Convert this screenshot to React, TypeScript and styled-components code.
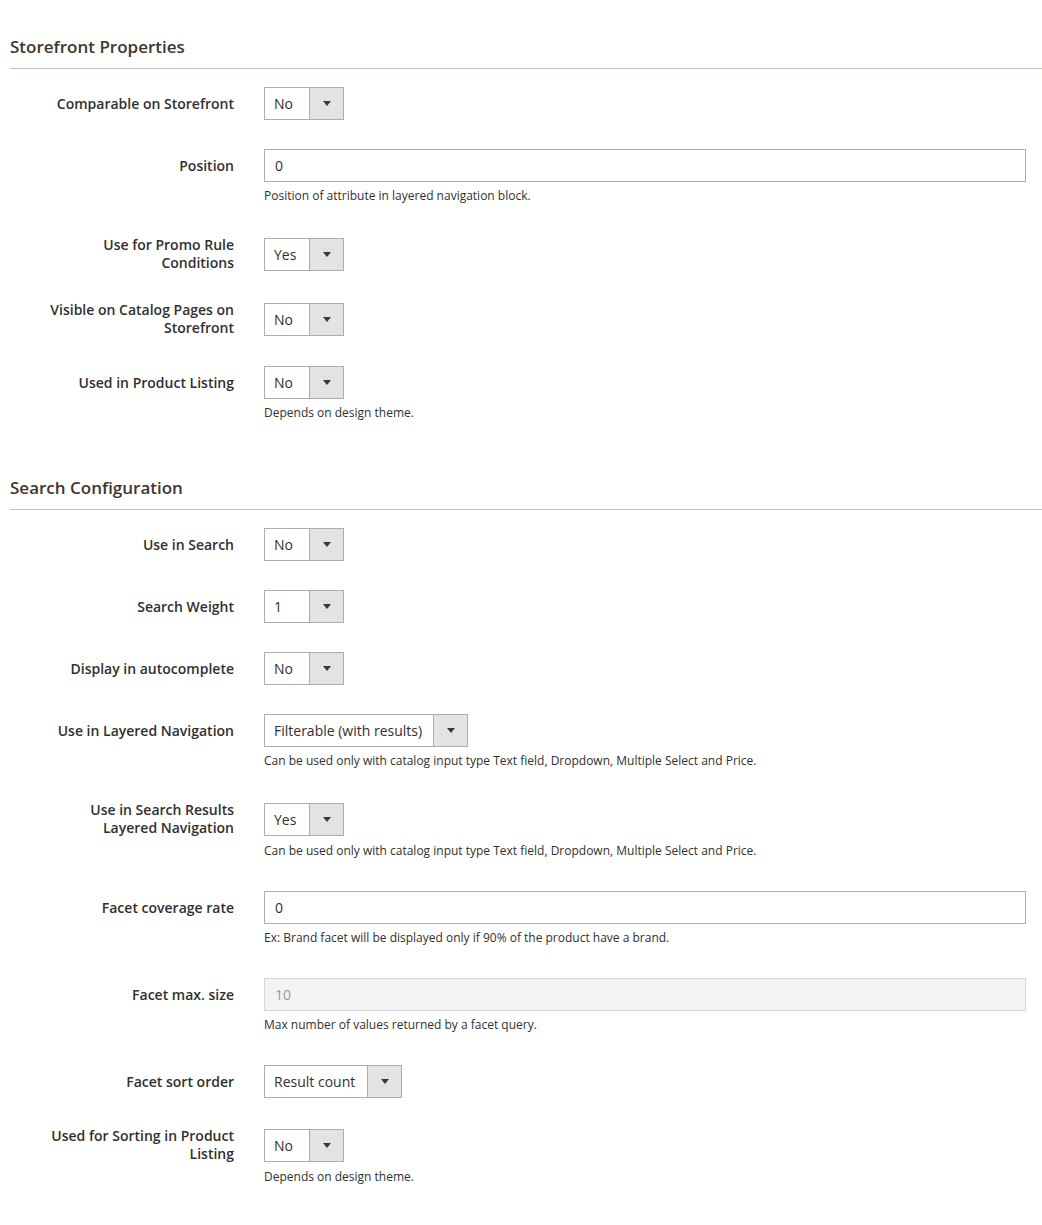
import React from 'react';
import styled, { createGlobalStyle } from 'styled-components';

const GlobalStyle = createGlobalStyle`
  body {
    margin: 0;
    background: #ffffff;
    font-family: 'Open Sans', 'Liberation Sans', sans-serif;
    color: #303030;
  }
`;

const Page = styled.div`
  padding: 36px 0 40px 10px;
`;

const Fieldset = styled.section`
  & + & {
    padding-top: 24px;
  }
`;

const Legend = styled.h2`
  margin: 0 0 18px;
  padding-bottom: 10px;
  border-bottom: 1px solid #cac3b4;
  font-size: 17px;
  font-weight: 600;
  line-height: 22px;
  color: #41362f;
`;

const Field = styled.div`
  display: grid;
  grid-template-columns: 224px 762px;
  column-gap: 30px;
  margin-bottom: 29px;
`;

const Label = styled.label`
  grid-row: 1;
  grid-column: 1;
  align-self: center;
  padding-left: 34px;
  text-align: right;
  font-size: 14px;
  font-weight: 600;
  line-height: 18px;
  color: #303030;
`;

const Control = styled.div`
  grid-row: 1;
  grid-column: 2;
  align-self: center;
  display: flex;
`;

const Note = styled.div`
  grid-row: 2;
  grid-column: 2;
  margin: 4px 0 1px;
  font-size: 12px;
  line-height: 20px;
  color: #303030;
`;

const TextInput = styled.input`
  box-sizing: border-box;
  width: 100%;
  height: 33px;
  padding: 0 10px;
  border: 1px solid #adadad;
  border-radius: 0;
  background: #ffffff;
  font-family: inherit;
  font-size: 14px;
  color: #303030;
  outline: none;

  &:disabled {
    background: #e9e9e9;
    opacity: 0.5;
  }
`;

const SelectBox = styled.div<{ $width: number }>`
  box-sizing: border-box;
  display: flex;
  width: ${(p) => p.$width}px;
  height: 33px;
  border: 1px solid #adadad;
  background: #ffffff;
`;

const SelectValue = styled.span`
  flex: 1;
  padding-left: 9px;
  font-size: 14px;
  line-height: 31px;
  color: #303030;
  white-space: nowrap;
`;

const SelectButton = styled.span`
  box-sizing: border-box;
  display: flex;
  align-items: center;
  justify-content: center;
  width: 34px;
  border-left: 1px solid #adadad;
  background: #e3e3e3;

  &::after {
    content: '';
    border-style: solid;
    border-width: 5px 4px 0;
    border-color: #41362f transparent transparent;
  }
`;

type FieldDef = {
  label: string;
  kind: 'select' | 'text';
  value: string;
  width?: number;
  note?: string;
  disabled?: boolean;
};

const designNote = 'Depends on design theme.';
const layeredNote =
  'Can be used only with catalog input type Text field, Dropdown, Multiple Select and Price.';

const sections: { title: string; fields: FieldDef[] }[] = [
  {
    title: 'Storefront Properties',
    fields: [
      { label: 'Comparable on Storefront', kind: 'select', value: 'No' },
      {
        label: 'Position',
        kind: 'text',
        value: '0',
        note: 'Position of attribute in layered navigation block.',
      },
      { label: 'Use for Promo Rule Conditions', kind: 'select', value: 'Yes' },
      { label: 'Visible on Catalog Pages on Storefront', kind: 'select', value: 'No' },
      { label: 'Used in Product Listing', kind: 'select', value: 'No', note: designNote },
    ],
  },
  {
    title: 'Search Configuration',
    fields: [
      { label: 'Use in Search', kind: 'select', value: 'No' },
      { label: 'Search Weight', kind: 'select', value: '1' },
      { label: 'Display in autocomplete', kind: 'select', value: 'No' },
      {
        label: 'Use in Layered Navigation',
        kind: 'select',
        value: 'Filterable (with results)',
        width: 204,
        note: layeredNote,
      },
      {
        label: 'Use in Search Results Layered Navigation',
        kind: 'select',
        value: 'Yes',
        note: layeredNote,
      },
      {
        label: 'Facet coverage rate',
        kind: 'text',
        value: '0',
        note: 'Ex: Brand facet will be displayed only if 90% of the product have a brand.',
      },
      {
        label: 'Facet max. size',
        kind: 'text',
        value: '10',
        disabled: true,
        note: 'Max number of values returned by a facet query.',
      },
      { label: 'Facet sort order', kind: 'select', value: 'Result count', width: 138 },
      {
        label: 'Used for Sorting in Product Listing',
        kind: 'select',
        value: 'No',
        note: designNote,
      },
    ],
  },
];

const FormField: React.FC<{ field: FieldDef }> = ({ field }) => (
  <Field>
    <Label>{field.label}</Label>
    <Control>
      {field.kind === 'text' ? (
        <TextInput value={field.value} disabled={field.disabled} readOnly />
      ) : (
        <SelectBox $width={field.width ?? 80}>
          <SelectValue>{field.value}</SelectValue>
          <SelectButton />
        </SelectBox>
      )}
    </Control>
    {field.note && <Note>{field.note}</Note>}
  </Field>
);

const App: React.FC = () => {
  return (
    <>
      <GlobalStyle />
      <Page>
        {sections.map((section) => (
          <Fieldset key={section.title}>
            <Legend>{section.title}</Legend>
            {section.fields.map((field) => (
              <FormField key={field.label} field={field} />
            ))}
          </Fieldset>
        ))}
      </Page>
    </>
  );
};

export default App;
